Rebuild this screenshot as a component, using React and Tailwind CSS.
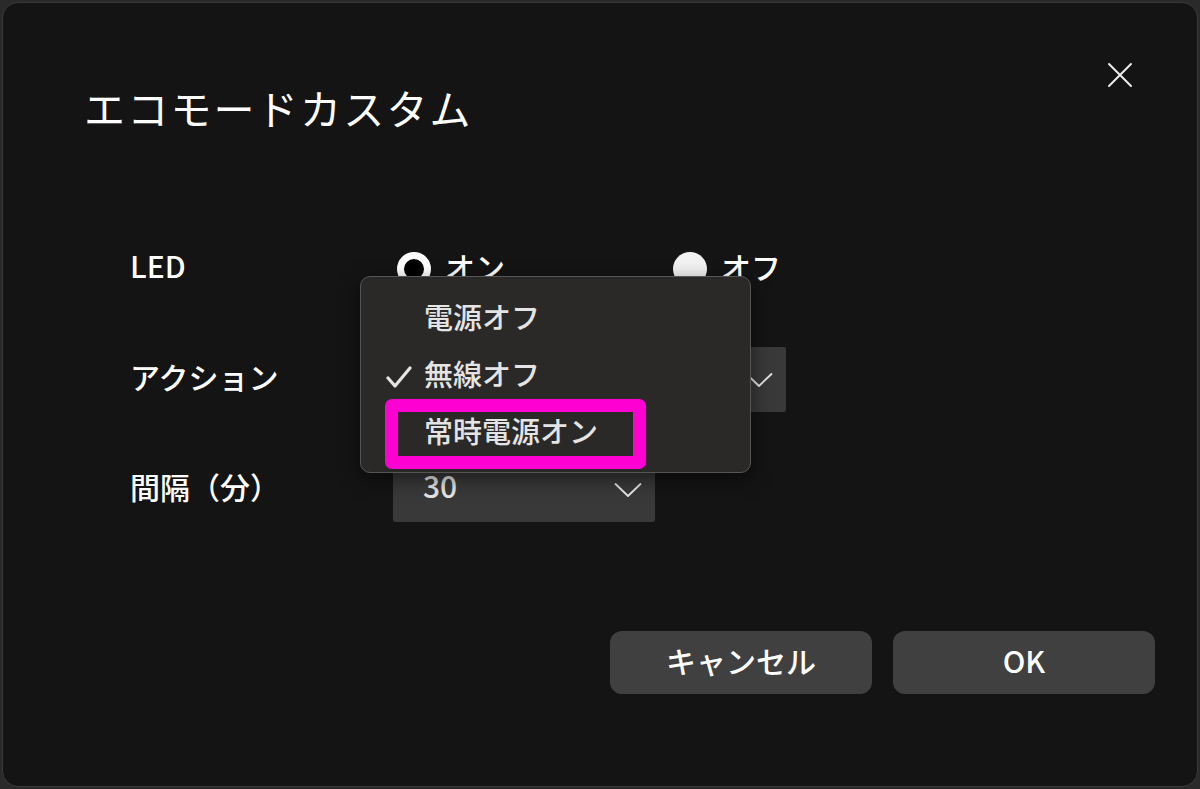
import React from 'react'

const font = { fontFamily: '"Noto Sans CJK JP", "Noto Sans", sans-serif' }

const Chevron = ({ className }) => (
  <svg viewBox="0 0 28 16" className={className} fill="none" stroke="currentColor" strokeWidth="1.8" strokeLinecap="round" strokeLinejoin="round">
    <polyline points="1.5,2 14,14 26.5,2" />
  </svg>
)

const Check = ({ className }) => (
  <svg viewBox="0 0 26 24" className={className} fill="none" stroke="currentColor" strokeWidth="3.2" strokeLinecap="round" strokeLinejoin="round">
    <polyline points="2,13 9,21 24,3" />
  </svg>
)

const Radio = ({ checked, label }) => (
  <div className="flex items-center gap-[14px] w-[276px]">
    {checked ? (
      <span className="w-[34px] h-[34px] rounded-full border-[7px] border-white bg-black" />
    ) : (
      <span className="w-[34px] h-[34px] rounded-full bg-[#f2f2f2]" />
    )}
    <span className="text-[30px] font-medium text-white leading-none pb-[6px]">{label}</span>
  </div>
)

const Select = ({ value, width }) => (
  <div className={"h-[65px] bg-[#393939] rounded-[2px] flex items-center justify-between pl-[30px] pr-[13px] text-[#e6e6e6] " + width}>
    <span className="text-[30px] font-medium leading-none pb-[10px]">{value}</span>
    <Chevron className="w-[28px] h-[16px]" />
  </div>
)

const Label = ({ children, width }) => (
  <span className={"text-[30px] font-medium text-white leading-none pb-[8px] " + width}>{children}</span>
)

export default function App() {
  return (
    <div className="w-[1200px] h-[789px] bg-[#2a2a2a] p-[2px]" style={font}>
      <div className="relative w-full h-full rounded-[16px] border border-[#3a3a3a] bg-[#141414] flex flex-col">
        <div className="flex justify-between items-start">
          <h1 className="ml-[81px] mt-[80px] text-[41px] leading-[48px] text-white tracking-[2.2px]">エコモードカスタム</h1>
          <button className="mt-[58px] mr-[63px] text-[#ededed]">
            <svg viewBox="0 0 28 28" className="w-[28px] h-[28px]" fill="none" stroke="currentColor" strokeWidth="2" strokeLinecap="round">
              <line x1="3" y1="3" x2="25" y2="25" />
              <line x1="25" y1="3" x2="3" y2="25" />
            </svg>
          </button>
        </div>

        <div className="ml-[127px] mt-[105px] flex flex-col">
          <div className="h-[65px] flex items-center">
            <Label width="w-[267px]">LED</Label>
            <Radio checked label="オン" />
            <Radio label="オフ" />
          </div>
          <div className="h-[65px] mt-[46px] flex items-center">
            <Label width="w-[263px]">アクション</Label>
            <Select value="" width="w-[393px]" />
          </div>
          <div className="h-[65px] mt-[45px] flex items-center">
            <Label width="w-[263px]">間隔（分）</Label>
            <Select value="30" width="w-[262px]" />
          </div>
        </div>

        <div className="mt-auto mb-[92px] mr-[42px] flex justify-end gap-[21px]">
          <button className="w-[262px] h-[63px] rounded-[12px] bg-[#404040] text-[30px] font-medium text-white pb-[4px]">キャンセル</button>
          <button className="w-[262px] h-[63px] rounded-[12px] bg-[#404040] text-[30px] font-medium text-white pb-[4px]">OK</button>
        </div>

        <div className="absolute left-[357px] top-[273px] w-[391px] h-[197px] rounded-[10px] border border-[#555] bg-[#2b2928] shadow-[0_6px_20px_rgba(0,0,0,0.5)] pt-[14px]">
          {['電源オフ', '無線オフ', '常時電源オン'].map((t, i) => (
            <div key={t} className="h-[57px] flex items-center pl-[63px] relative text-[29px] font-medium text-[#e4e4e4] leading-none">
              {i === 1 && <Check className="absolute left-[25px] top-[17px] w-[26px] h-[24px]" />}
              <span className="pb-[6px]">{t}</span>
            </div>
          ))}
        </div>

        <div className="absolute left-[382px] top-[396px] w-[261px] h-[70px] border-[13px] border-[#ff00d2] rounded-[7px]" />
      </div>
    </div>
  )
}
